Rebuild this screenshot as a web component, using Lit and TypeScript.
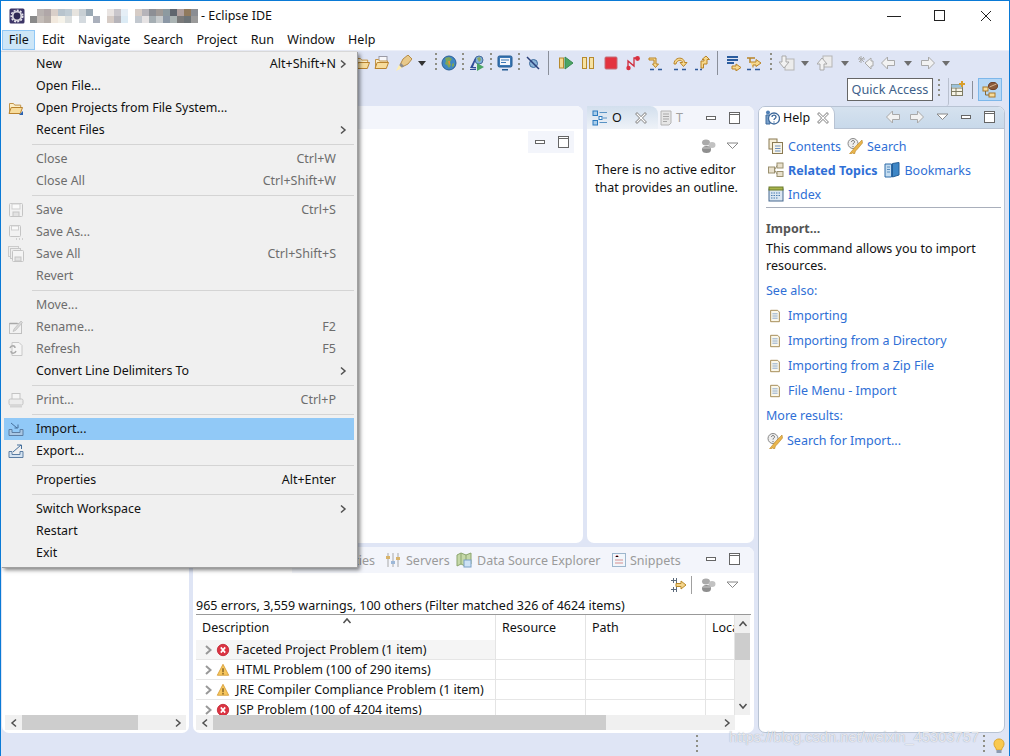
import { LitElement, html, css, svg } from "lit";
import { customElement } from "lit/decorators.js";

const s16 = (c: any, sz = 16) => html`<svg class="ic" width=${sz} height=${sz} viewBox="0 0 16 16">${c}</svg>`;

const shapes: Record<string, any> = {
  eclipse: svg`<rect x="0.5" y="0.5" width="15" height="15" rx="1.5" fill="#3c3566"/><circle cx="8" cy="8" r="5.200" fill="#d8d6de"/><circle cx="8" cy="8" r="5.800" fill="none" stroke="#e8e6ee" stroke-width="1.500" stroke-dasharray="2 1.300"/><circle cx="8" cy="8" r="3.400" fill="#2f2a55"/>`,
  folder: svg`<path d="M1.5 13V3.5h4l1.2 1.6h6V8" fill="#fbeec8" stroke="#c2944a"/><path d="M1 13.5l2.2-6h11.3l-2.2 6z" fill="#f7dc9c" stroke="#b9832f"/>`,
  folderBlue: svg`<path d="M1.5 13V3.5h4l1.2 1.6h6V8" fill="#fbeec8" stroke="#c2944a"/><path d="M1 13.5l2.2-6h11.3l-2.2 6z" fill="#f7dc9c" stroke="#b9832f"/><path d="M11 15l4-4v4z" fill="#2a62b0"/>`,
  openDoc: svg`<rect x="5" y="1.5" width="8" height="6" fill="#f7f7fa" stroke="#9a9aa5"/><path d="M1.5 13V4.5h3l1 1.5h8V8" fill="#fbeec8" stroke="#c2944a"/><path d="M1 13.5l2.2-6h11.3l-2.2 6z" fill="#f7dc9c" stroke="#b9832f"/>`,
  pen: svg`<path d="M4 10l3-6 5-4 4 4-4 5-6 3z" fill="#e8c98a" stroke="#b58b46"/><path d="M5 8l3 3-3 2-2-2z" fill="#8d8d8d"/><path d="M0 16l3-6 3 3z" fill="#ffeeb0"/>`,
  globe: svg`<circle cx="8" cy="8" r="7" fill="#3f87c4" stroke="#2a5f95"/><path d="M4 3l4-1 3 2-2 3 1 3-2 3-2-3-2-1 1-3z" fill="#7ea65a"/><path d="M7 6l2 0 0 3-1 1z" fill="#e2913a"/><path d="M11 9l2-1 0 3-2 1z" fill="#7ea65a"/>`,
  runWeb: svg`<circle cx="10" cy="5" r="4" fill="#7cb0d8" stroke="#496c9b"/><path d="M8 3l3-1 1 3-2 2z" fill="#8fa860"/><path d="M1 13L6 3l1 1-3 8h3v1.500z" fill="#2f4d99"/><path d="M1 14h6v1H1z" fill="#2f4d99"/><path d="M8 8l7 4-7 4z" fill="#4aa564"/>`,
  monitor: svg`<rect x="1" y="1" width="14" height="11" rx="1.500" fill="#3b78b5" stroke="#235a92"/><rect x="3" y="3" width="10" height="7" fill="#f3f6fb"/><path d="M4 5h8M4 7.500h5" stroke="#3b78b5"/><path d="M5 14h6v1.500H5z" fill="#235a92"/>`,
  slash: svg`<ellipse cx="8.500" cy="8.500" rx="4" ry="4" fill="#8bb4d8" stroke="#3d6a9c"/><path d="M2 2l12 12" stroke="#2a3f7a" stroke-width="1.500"/>`,
  resume: svg`<rect x="1.500" y="3" width="4" height="10" fill="#f4d98e" stroke="#b78a2e"/><path d="M7 2l8 6-8 6z" fill="#4aa564" stroke="#3a8a52"/>`,
  pause: svg`<rect x="2.500" y="2.500" width="4" height="11" fill="#f6e2a4" stroke="#b78a2e"/><rect x="9.500" y="2.500" width="4" height="11" fill="#f6e2a4" stroke="#b78a2e"/>`,
  stop: svg`<rect x="2" y="2" width="12" height="12" rx="1" fill="#e3333f" stroke="#c2707a"/>`,
  disc: svg`<path d="M3 13V6l6 5V3l2 0" fill="none" stroke="#cf2a3a" stroke-width="1.300"/><circle cx="3.500" cy="13" r="2.200" fill="#d9303f"/><circle cx="12.500" cy="3.500" r="2.400" fill="#d9303f"/>`,
  into: svg`<path d="M1 3h7v6h2.500L7.500 12.500 4.500 9H6V5H1z" fill="#f7d98f" stroke="#b98427"/><path d="M2 14.500h4M10 14.500h4" stroke="#2e5a9a" stroke-width="1.500"/>`,
  over: svg`<path d="M2 9C2 2 12 1 12.500 7.500H15l-3.500 4-3.500-4h2.500C10 4 4.500 5 4 9z" fill="#f7d98f" stroke="#b98427"/><path d="M2 14.500h4M10 14.500h4" stroke="#2e5a9a" stroke-width="1.500"/>`,
  ret: svg`<path d="M7 13V6h3V4.500H8L12 1l3.500 3.500H13V9H9.500v4z" fill="#f7d98f" stroke="#b98427"/><path d="M1 14.500h3M6 14.500h2" stroke="#2e5a9a" stroke-width="1.500"/>`,
  filters: svg`<path d="M1 2h11M1 5h11M1 8h7" stroke="#2b5c9e" stroke-width="2"/><path d="M6 11h4V9l5 3.500L10 16v-2H6z" fill="#f7d98f" stroke="#b98427"/>`,
  tfilter: svg`<path d="M1 3h8M4 3v5" stroke="#b98427" stroke-width="1.500"/><path d="M4 7h6V4.500l5 3.500-5 3.500V10H7v2.500" fill="#f7d98f" stroke="#b98427"/><path d="M1 14.500h4M9 14.500h5" stroke="#2e5a9a" stroke-width="1.500"/>`,
  down: svg`<rect x="6" y="4" width="9" height="11" fill="#ececec" stroke="#b5b5b5"/><path d="M3 1h4v6h3l-5 6-5-6h3z" fill="#f2f2f2" stroke="#a9a9a9"/>`,
  up: svg`<rect x="6" y="1" width="9" height="11" fill="#ececec" stroke="#b5b5b5"/><path d="M3 15h4V9h3L5 3 0 9h3z" fill="#f2f2f2" stroke="#a9a9a9"/>`,
  lastEdit: svg`<path d="M7 8l6-5v3h2v5h-2v3z" fill="#f2f2f2" stroke="#a9a9a9"/><path d="M3 1v7M0 4h7M1 2l5 5M6 2L1 7" stroke="#aaa"/>`,
  back: svg`<path d="M1.500 8l6-6v3.500h7v5h-7V14z" fill="#f2f2f2" stroke="#a9a9a9"/>`,
  fwd: svg`<path d="M14.500 8l-6-6v3.500h-7v5h7V14z" fill="#f2f2f2" stroke="#a9a9a9"/>`,
  perspNew: svg`<rect x="1.500" y="3.500" width="11" height="11" fill="#f6f3e6" stroke="#7d7a63"/><path d="M1.500 7h11M6 7v7.500M1.500 10.500h11" stroke="#7d7a63"/><rect x="1.500" y="3.500" width="11" height="3" fill="#9bc3dd"/><path d="M12 0v6M9 3h6" stroke="#d99e2c" stroke-width="2"/>`,
  persp: svg`<rect x="1" y="5" width="5" height="4" fill="#f7dc9c" stroke="#a8792b"/><rect x="7" y="11" width="6" height="4" fill="#f7dc9c" stroke="#a8792b"/><path d="M3.500 9v4H7" fill="none" stroke="#8a6a30"/><ellipse cx="11" cy="4" rx="4.500" ry="3.600" fill="#8a5a3a" stroke="#6d3f25"/><path d="M7.500 5l7-3" stroke="#d6b48f"/>`,
  outline: svg`<rect x="1" y="1" width="4.500" height="4.500" fill="#a9cdea" stroke="#2d7bbf"/><rect x="1" y="10.500" width="4.500" height="4.500" fill="#a9cdea" stroke="#2d7bbf"/><rect x="7" y="6.500" width="3" height="3" fill="#fff" stroke="#2d7bbf"/><path d="M7.500 2.500H15M11 8h4M7.500 12.500H15" stroke="#5a93c4"/>`,
  tasks: svg`<path d="M3 1h10v12l-2 2H3z" fill="#e6e6e6" stroke="#b4b4b4"/><path d="M5 4h6M5 6.500h6M5 9h6M5 11.500h4" stroke="#a8a8a8"/>`,
  cogs: svg`<ellipse cx="6" cy="4.500" rx="4" ry="3" fill="#aaa"/><ellipse cx="12" cy="7" rx="3.500" ry="3" fill="#c2c2c2"/><ellipse cx="6.500" cy="11.500" rx="4.500" ry="3.500" fill="#8f8f8f"/><path d="M3 10h7" stroke="#ccc"/>`,
  helpI: svg`<circle cx="4" cy="2.500" r="2" fill="#4e7fb5"/><path d="M2 5h4v9H2z" fill="#7ba2cb" stroke="#3e6a9c"/><circle cx="10" cy="8.500" r="5.500" fill="#fff" stroke="#3e6a9c" stroke-width="1.300"/><path d="M8 7c0-2.500 4-2.500 4 0 0 1.500-2 1.500-2 3M10 11.500v1" fill="none" stroke="#3e6a9c" stroke-width="1.300"/>`,
  contents: svg`<rect x="1" y="1" width="8" height="10" fill="#f6efd9" stroke="#8a7a52"/><rect x="4.500" y="4.500" width="10" height="11" fill="#f8f4e6" stroke="#8a7a52"/><path d="M7 8h5.500M7 10.500h5.500M7 13h5.500" stroke="#6a8fc0"/>`,
  search: svg`<circle cx="6" cy="5.500" r="5" fill="#eee" stroke="#888"/><path d="M4.500 4c0-2 3-2 3 0 0 1-1.500 1.200-1.500 2.500M6 8v1" stroke="#6a6a6a" fill="none"/><path d="M9 8l6-6 0.500 3-5 6-2 2-1 3-2-1-4 2z" fill="#e9b54d" stroke="#b98427" stroke-width=".6"/>`,
  related: svg`<rect x="0.500" y="5" width="6" height="6" fill="#e8e0cc" stroke="#9a906f"/><rect x="9" y="1" width="6" height="5" fill="#e8e0cc" stroke="#9a906f"/><rect x="9" y="9.500" width="6" height="5" fill="#e8e0cc" stroke="#9a906f"/><path d="M6.500 8L9 3.500M6.500 8L9 12" stroke="#9a906f"/>`,
  book: svg`<path d="M1 2h6.500v13H1z" fill="#c5ddf0" stroke="#2c6aa8"/><path d="M8.500 1.500l6.500-1V13l-6.500 2z" fill="#3d86c6" stroke="#245e96"/><path d="M3 5h3M3 7.500h3M3 10h3" stroke="#5a8ec0"/>`,
  index: svg`<rect x="1" y="3" width="14" height="12" fill="#dbe6f2" stroke="#46688f"/><rect x="1" y="1" width="14" height="3" fill="#a8b44c" stroke="#6a7a2a"/><path d="M3 7h10M3 9.500h10M3 12h7" stroke="#4b7cb0" stroke-dasharray="1.500 1"/>`,
  doc: svg`<path d="M3 1.500h8l2 2v11H3z" fill="#fbf8ec" stroke="#9b7f45"/><path d="M5 5.500h6M5 8h6M5 10.500h6" stroke="#7fa0cc"/>`,
  servers: svg`<path d="M3 1v14M8 1v14M13 1v14" stroke="#a9a9a9"/><rect x="1" y="4" width="4" height="3" fill="#d8b36a"/><rect x="6" y="9" width="4" height="3" fill="#9db8d8"/><rect x="11" y="5" width="4" height="3" fill="#d8b36a"/>`,
  datasrc: svg`<path d="M1 3l4-2 5 2 5-2v11l-5 2.500L5 12l-4 2z" fill="#c5d8a8" stroke="#8ba56e"/><path d="M5 1v11M10 3v11" stroke="#8ba56e"/><rect x="8" y="8" width="7" height="7" fill="#cde2f5" stroke="#7ba0c5"/>`,
  snippets: svg`<rect x="1.500" y="1.500" width="13" height="13" fill="#f1f6fb" stroke="#9db6cd"/><path d="M4 5l2-2 2 2M4 8h8M4 11h8" stroke="#d78f8f"/>`,
  pin: svg`<path d="M1 3.500h5M3.500 1v5M1 12.500h5M3.500 10v5M6.500 1v6M6.500 9v6" stroke="#5c6b7c"/><path d="M6 6.500h5V4l5 4-5 4V9.500H6z" fill="#f4d48a" stroke="#ba8a2a"/>`,
  err: svg`<circle cx="8" cy="8" r="6.500" fill="#dc3342" stroke="#c22a38"/><path d="M5.500 5l5 6M10.500 5l-5 6" stroke="#fff" stroke-width="1.800"/>`,
  warn: svg`<path d="M8 1.500l6.500 12.500h-13z" fill="#f7c65c" stroke="#d69e3a"/><path d="M8 6v4.500M8 11.500v1.500" stroke="#7a5a20" stroke-width="1.500"/>`,
  save: svg`<rect x="1.500" y="1.500" width="13" height="13" rx="1" fill="#f2f2f2" stroke="#c4c4c4"/><rect x="4" y="2" width="8" height="5" fill="#fafafa" stroke="#cfcfcf"/><rect x="5" y="10" width="6" height="4.500" fill="#e2e2e2" stroke="#c4c4c4"/>`,
  saveAs: svg`<rect x="1.500" y="1.500" width="11" height="11" rx="1" fill="#f2f2f2" stroke="#c4c4c4"/><rect x="3.500" y="2" width="7" height="4" fill="#fafafa" stroke="#cfcfcf"/><path d="M8 15h1M11 15h1M14 15h1" stroke="#b0b0b0"/>`,
  saveAll: svg`<rect x="0.500" y="0.500" width="10" height="10" fill="#eee" stroke="#ccc"/><rect x="2.500" y="2.500" width="10" height="10" fill="#eee" stroke="#c8c8c8"/><rect x="4.500" y="4.500" width="11" height="11" rx="1" fill="#f4f4f4" stroke="#c4c4c4"/><rect x="7" y="11" width="6" height="4" fill="#e2e2e2" stroke="#c4c4c4"/>`,
  rename: svg`<rect x="1.500" y="4.500" width="12" height="10" fill="#f2f2f2" stroke="#c0c0c0"/><path d="M1.500 4.500h8" stroke="#a8a8a8" stroke-width="1.500"/><path d="M6 10l7-8 1.500 1.500-7 8-2.500 1z" fill="#d8d8d8" stroke="#bbb" stroke-width=".7"/>`,
  refresh: svg`<path d="M4 1.500h7l3 3v10H4z" fill="#f5f5f5" stroke="#c8c8c8"/><path d="M2 7c1-3 5-3 5 0M8 10c-1 3-5 3-5 0" stroke="#aaa" stroke-width="1.500" fill="none"/>`,
  print: svg`<rect x="4" y="1.500" width="8" height="6" fill="#f5f5f5" stroke="#c4c4c4"/><rect x="1" y="7" width="14" height="6" rx="1.500" fill="#ececec" stroke="#c4c4c4"/><path d="M2 14.500h12" stroke="#d4d4d4" stroke-width="2"/>`,
  import: svg`<path d="M1 8.500v6h14v-6h-3v3H4v-3z" fill="#a9c7e4" stroke="#5d7ea3"/><path d="M3 2l6 5M6.500 7H10V3.500" fill="none" stroke="#47709c"/>`,
  export: svg`<path d="M1 8.500v6h14v-6h-3v3H4v-3z" fill="#d6e4f2" stroke="#5d7ea3"/><path d="M5 9l8-7M9 2h4.500v4" fill="none" stroke="#47709c"/>`,
  bulb: svg`<path d="M8 1C4 1 3 4 3 6c0 2.500 2 3.500 2.500 6h5C11 9.500 13 8.500 13 6c0-2-1-5-5-5z" fill="#f9c94f" stroke="#dca32a"/><rect x="5.500" y="12" width="5" height="3" fill="#8d9bb0"/>`,
  close: svg`<path d="M4 4l8 8M12 4l-8 8" stroke="#8c8c8c" stroke-width="2.800" stroke-linecap="square"/><path d="M4 4l8 8M12 4l-8 8" stroke="#fff" stroke-width="1.100" stroke-linecap="square"/>`,
  min: svg`<rect x="3.500" y="6.500" width="9" height="3" fill="#fff" stroke="#666"/>`,
  max: svg`<rect x="3.500" y="2.500" width="10" height="11" fill="#fff" stroke="#666"/><path d="M3.500 4.500h10" stroke="#666"/>`,
  menuTri: svg`<path d="M2 5h11L7.500 10.500z" fill="#fff" stroke="#888"/>`,
};
const ic = (n: string, sz = 16) => s16(shapes[n], sz);

const chev = (d: string, col = "#505050", w = 1.5) => html`<svg class="ic" width="10" height="10" viewBox="0 0 10 10"><path d=${d} fill="none" stroke=${col} stroke-width=${w}/></svg>`;
const L = chev("M7 1.500L3 5l4 3.500");
const R = chev("M3 1.500L7 5 3 8.500");
const U = chev("M1.500 7L5 3l3.500 4");
const D = chev("M1.500 3L5 7l3.500-4");
const EXP = chev("M3 1L7.500 5 3 9", "#999", 2);

type TB = [number, string];
const TOOLS: TB[] = [
  [362, "folder"], [380, "openDoc"], [405, "pen"], [424, "#tri"], [435, "#grip"], [449, "globe"], [463, "#grip"],
  [477, "runWeb"], [491, "#grip"], [505, "monitor"], [519, "#grip"], [533, "slash"], [547, "#sep"], [565, "resume"],
  [588, "pause"], [611, "stop"], [632, "disc"], [655, "into"], [680, "over"], [705, "ret"], [716, "#sep"], [732, "filters"],
  [756, "tfilter"], [772, "#grip"], [785, "down"], [804, "#trig"], [825, "up"], [845, "#trig"], [864, "lastEdit"], [889, "back"],
  [908, "#trig"], [928, "fwd"], [947, "#trig"],
];

const MOSAIC = [
  "#fff #b9b3b1 #b0a7a8 #d9cfc9 #b8c4cd #c0ccd4 #e7e4df #c8cfd4 #9aa9b5 #fff #fff #e9e4e2 #c9c6cb #e5eef6 #fff #d6ccc6 #b6b4ba #8d8f95 #a09a97 #8d9aa0 #60666e #b0a09e #907a5e #8a8d93",
  "#8a8a8a #c4bdb8 #b6aea9 #f2e9de #f6f3ea #dde0df #fff #d4dadf #fff #aab0bc #fff #d6ccc6 #b6b4ba #dcebf5 #fff #c2c8cf #e6e3e4 #a5aeb3 #c8ccce #8b97a5 #aab3b3 #7a7a7a #6d7376 #9a9a9a",
];

const MENU: any[] = [
  { t: "New", k: "Alt+Shift+N", a: 1 }, { t: "Open File..." }, { t: "Open Projects from File System...", i: "folderBlue" }, { t: "Recent Files", a: 1 }, 0,
  { t: "Close", k: "Ctrl+W", d: 1 }, { t: "Close All", k: "Ctrl+Shift+W", d: 1 }, 0,
  { t: "Save", k: "Ctrl+S", d: 1, i: "save" }, { t: "Save As...", d: 1, i: "saveAs" }, { t: "Save All", k: "Ctrl+Shift+S", d: 1, i: "saveAll" }, { t: "Revert", d: 1 }, 0,
  { t: "Move...", d: 1 }, { t: "Rename...", k: "F2", d: 1, i: "rename" }, { t: "Refresh", k: "F5", d: 1, i: "refresh" }, { t: "Convert Line Delimiters To", a: 1 }, 0,
  { t: "Print...", k: "Ctrl+P", d: 1, i: "print" }, 0,
  { t: "Import...", i: "import", h: 1 }, { t: "Export...", i: "export" }, 0,
  { t: "Properties", k: "Alt+Enter" }, 0,
  { t: "Switch Workspace", a: 1 }, { t: "Restart" }, { t: "Exit" },
];

const ROWS = [
  ["err", "Faceted Project Problem (1 item)"],
  ["warn", "HTML Problem (100 of 290 items)"],
  ["warn", "JRE Compiler Compliance Problem (1 item)"],
  ["err", "JSP Problem (100 of 4204 items)"],
];

@customElement("app-root")
export class AppRoot extends LitElement {
  static styles = css`
    :host { display: block; width: 1010px; height: 756px; font-family: "Noto Sans", sans-serif; font-size: 12.5px; color: #111; }
    * { box-sizing: border-box; }
    .ic { display: block; flex: none; }
    .root { position: relative; width: 1010px; height: 756px; overflow: hidden; background: #dfe5f5; border: solid #0a7ad6; border-width: 1px 1px 0 1px; display: flex; flex-direction: column; }
    .title { height: 29px; background: #fff; display: flex; align-items: center; padding-left: 8px; flex: none; }
    .mosaic { display: grid; grid-template-columns: repeat(24, 7px); grid-auto-rows: 7px; margin-left: 5px; }
    .apptitle { margin-left: 3px; }
    .winbtns { margin-left: auto; display: flex; }
    .winbtn { width: 46px; height: 29px; display: flex; align-items: center; justify-content: center; }
    .menubar { height: 20px; background: #fff; display: flex; flex: none; padding-left: 1px; line-height: 20px; }
    .mi { padding: 0 6.700px; }
    .mi.on { background: #cde6f7; box-shadow: inset 0 0 0 1px #90c8f6; }
    .tb1 { height: 25px; flex: none; display: flex; align-items: center; padding-left: 353px; border-top: 1px solid #eceff8; }
    .slot { display: flex; justify-content: center; align-items: center; height: 24px; flex: none; }
    .grip { width: 2px; height: 20px; background: repeating-linear-gradient(to bottom, #8f8f85 0 2px, transparent 2px 5px); }
    .vsep { width: 1px; height: 24px; background: #8a8f9a; }
    .tri { width: 0; height: 0; border: 4px solid transparent; border-top: 5px solid #333; margin-top: 4px; }
    .trig { width: 0; height: 0; border: 4px solid transparent; border-top: 5px solid #6e6e6e; margin-top: 4px; }
    .tb2 { height: 31px; flex: none; display: flex; align-items: flex-start; padding: 3px 0 0 846px; }
    .qa { width: 86px; height: 23px; background: #fff; border: 1px solid #666; color: #3e5f8a; line-height: 21px; text-align: center; font-size: 12.7px; }
    .tb2 .grip { margin: 1px 5px 0 5px; height: 19px; }
    .curve { width: 4px; height: 28px; border-right: 1px solid #b9c0cf; border-radius: 0 0 3px 0; margin-right: 1px; }
    .pbtn { width: 16px; margin: 3px 6px 0 0; }
    .tb2 .vsep { height: 18px; margin: 3px 5px 0 0; }
    .pon { width: 24px; height: 23px; background: #b5d7f6; border: 1px solid #7db7ea; display: flex; align-items: center; justify-content: center; }
    .work { flex: 1; min-height: 0; display: flex; gap: 4px; padding: 0 4px 0 1px; }
    .panel { background: #fff; border-radius: 0 7px 7px 7px; display: flex; flex-direction: column; overflow: hidden; min-height: 0; position: relative; }
    .left { width: 187px; justify-content: flex-end; padding: 0 3px 3px; border-radius: 7px; }
    .mid { width: 561px; display: flex; flex-direction: column; gap: 4px; }
    .midtop { height: 437px; display: flex; gap: 4px; flex: none; }
    .editor { width: 390px; }
    .tabs { height: 23px; flex: none; background: #f3f5fb; display: flex; align-items: center; }
    .edtool { margin: 2px 9px 0 auto; width: 46px; height: 22px; background: #f3f5fb; display: flex; align-items: center; justify-content: center; gap: 7px; }
    .outline { width: 167px; }
    .tab { height: 23px; display: flex; align-items: center; flex: none; }
    .otab { width: 71px; background: linear-gradient(#d2dfed, #eef2f8); border-radius: 0 8px 0 0; padding-left: 5px; }
    .otab span { margin: 0 8px 0 4px; color: #111; width: 13px; }
    .ttab { color: #a0a0a0; width: 44px; gap: 2px; justify-content: flex-start; }
    .viewbtns { margin-left: auto; display: flex; gap: 7px; padding-right: 12px; }
    .otool { height: 31px; display: flex; align-items: center; justify-content: flex-end; gap: 9px; padding: 2px 13px 0 0; }
    .otext { padding-left: 8px; line-height: 17.500px; margin-top: 1px; }
    .help { width: 247px; border: 1px solid #b8c3d3; border-radius: 7px; padding: 0; }
    .htabs { background: linear-gradient(#d6e2ef, #c8d9ea); height: 23px; flex: none; display: flex; align-items: center; margin-top: -1px; border-bottom: 1px solid #b8c3d3; }
    .htab { width: 76px; height: 23px; background: #fff; border-radius: 0 8px 0 0; display: flex; align-items: center; padding-left: 5px; margin-bottom: -1px; border-right: 1px solid #b8c3d3; }
    .htab span { margin: 0 5px 0 3px; }
    .harrows { margin-left: 50px; display: flex; gap: 8px; }
    .hright { margin-left: auto; display: flex; gap: 7px; padding-right: 7px; }
    .hbody { padding: 0 3px 0 7px; display: flex; flex-direction: column; }
    .hl { display: flex; align-items: center; color: #2f6fd6; height: 25px; padding-left: 1px; }
    .hl .ic { margin-right: 4px; }
    .indent { padding-left: 2px; }
    .fmrow { height: 24px; }
    .fmrow.a { margin-top: 5px; }
    .b { font-weight: 700; }
    .hr { height: 1px; background: #a9afbb; margin: 1px 0 12px; width: 235px; flex: none; }
    .himp { font-weight: 700; color: #555; height: 18px; line-height: 18px; }
    .hp { line-height: 17px; margin: 2px 0 4px; }
    .hlink { color: #2f6fd6; height: 25px; line-height: 25px; }
    .hlinkdoc { display: flex; align-items: center; height: 25px; color: #2f6fd6; padding-left: 2px; }
    .hlinkdoc .ic { margin-right: 6px; }
    .bottom { height: 186px; flex: none; border-radius: 7px; }
    .btabs { height: 26px; flex: none; background: #f3f5fb; display: flex; align-items: center; color: #9a9a9a; position: relative; }
    .bactive { width: 99px; height: 26px; background: #fff; flex: none; }
    .btab { display: flex; align-items: center; flex: none; }
    .bprops { width: 83px; justify-content: flex-end; }
    .bserv { width: 81px; padding-left: 10px; }
    .bdata { width: 155px; }
    .btabs .ic { margin-right: 5px; }
    .bsnip .ic { margin-right: 3px; }
    .btabs .viewbtns { padding-right: 12px; margin-top: -2px; }
    .btabs .viewbtns .ic { margin-right: 0; }
    .btool { height: 24px; flex: none; display: flex; align-items: center; justify-content: flex-end; padding: 0 13px 0 0; }
    .btool .vsep { height: 18px; margin: 0 8px 0 5px; background: #a0a0a0; }
    .btool .t { margin-left: 9px; }
    .sum { height: 18px; line-height: 17px; flex: none; margin: 0 3px; border-bottom: 1px solid #999; white-space: nowrap; }
    .tablewrap { display: flex; margin-left: 3px; height: 100px; flex: none; }
    .table { width: 539px; overflow: hidden; height: 100px; position: relative; }
    .thead { display: flex; height: 25px; line-height: 25px; }
    .trow { display: flex; height: 20px; line-height: 19px; }
    .cell { border-right: 1px solid #e4e4e4; flex: none; overflow: hidden; white-space: nowrap; padding-left: 6px; }
    .trow .cell { border-bottom: 1px solid #e6e6e6; }
    .c1 { width: 300px; } .c2 { width: 90px; } .c3 { width: 120px; } .c4 { width: 29px; }
    .desc { display: flex; align-items: center; padding-left: 7px; }
    .exp { margin-right: 3px; flex: none; }
    .desc > .ic { margin-right: 6px; }
    .first { background: #f5f5f5; }
    .sort { position: absolute; left: 146px; top: 1px; }
    .vbar { width: 15px; height: 100px; background: #f0f0f0; display: flex; flex-direction: column; align-items: center; flex: none; }
    .vb { height: 18px; display: flex; align-items: center; justify-content: center; flex: none; }
    .vthumb { width: 15px; height: 27px; background: #cdcdcd; flex: none; }
    .vsp { flex: 1; }
    .hbar { height: 15px; display: flex; background: #f0f0f0; flex: none; align-items: stretch; }
    .hb { width: 17px; display: flex; align-items: center; justify-content: center; flex: none; }
    .ht { flex: 1; min-width: 0; }
    .hth { height: 100%; background: #cdcdcd; }
    .bhbar { margin: 0 19px 3px 3px; }
    .status { height: 23px; flex: none; display: flex; align-items: center; padding-left: 695px; position: relative; }
    .status .grip { height: 20px; }
    .status .g2 { margin-left: 285px; }
    .status .bulb { margin-left: 6px; margin-top: 3px; }
    .wm { position: absolute; left: 728px; top: 727px; font-family: "Liberation Sans", sans-serif; font-size: 14.700px; line-height: 18px; color: rgba(255,255,255,.75); text-shadow: 0 0 1px rgba(110,120,140,.75); white-space: nowrap; }
    .menu { position: absolute; left: 0; top: 50px; width: 356px; height: 516px; background: #f0f0f0; box-shadow: 1px 1px 0 #a0a0a0, 3px 3px 4px rgba(0,0,0,.5); border-top: 1px solid #d8d8d8; padding: 1px 3px 0; font-size: 12.400px; }
    .it { height: 22px; display: flex; align-items: center; line-height: 22px; }
    .it.h { background: #91c9f7; }
    .icw { width: 32px; padding-left: 4px; flex: none; display: flex; }
    .it.d { color: #6d6d6d; }
    .it .k { margin-left: auto; font-size: 12.500px; }
    .arr { width: 18px; flex: none; display: flex; justify-content: flex-end; padding-right: 6px; }
    .sp { height: 7px; display: flex; align-items: center; padding-left: 28px; }
    .sp div { height: 1px; width: 100%; background: #d4d4d4; }
  `;

  private vb(...n: string[]) {
    return n.map((x) => ic(x));
  }

  private hbar(cls: string, w: number) {
    return html`<div class="hbar ${cls}"><div class="hb">${L}</div><div class="ht"><div class="hth" style="width:${w}px"></div></div><div class="hb">${R}</div></div>`;
  }

  private tools() {
    return TOOLS.map(([x, n], i) => {
      const prev = i === 0 ? 354 : TOOLS[i - 1][0];
      const next = i === TOOLS.length - 1 ? x + 16 : TOOLS[i + 1][0];
      const l = i === 0 ? 354 : (prev + x) / 2;
      const r = (x + next) / 2;
      const content = n === "#grip" ? html`<div class="grip"></div>`
        : n === "#sep" ? html`<div class="vsep"></div>`
        : n === "#tri" ? html`<div class="tri"></div>`
        : n === "#trig" ? html`<div class="trig"></div>`
        : ic(n);
      return html`<div class="slot" style="width:${r - l}px">${content}</div>`;
    });
  }

  render() {
    return html`<div class="root">
      <div class="title">
        ${ic("eclipse")}
        <div class="mosaic">${MOSAIC.flatMap((r) => r.split(" ").map((c) => html`<i style="background:${c}"></i>`))}</div>
        <span class="apptitle">- Eclipse IDE</span>
        <div class="winbtns">
          <div class="winbtn"><svg width="14" height="14"><path d="M0 7.500h14" stroke="#222"/></svg></div>
          <div class="winbtn"><svg width="12" height="12"><rect x=".5" y=".5" width="10" height="10" fill="none" stroke="#222"/></svg></div>
          <div class="winbtn"><svg width="12" height="12"><path d="M1 1l10 10M11 1L1 11" stroke="#222"/></svg></div>
        </div>
      </div>
      <div class="menubar">
        ${["File", "Edit", "Navigate", "Search", "Project", "Run", "Window", "Help"].map((m, i) => html`<div class="mi ${i === 0 ? "on" : ""}">${m}</div>`)}
      </div>
      <div class="tb1">${this.tools()}</div>
      <div class="tb2">
        <div class="qa">Quick Access</div>
        <div class="grip"></div>
        <div class="curve"></div>
        <div class="pbtn">${ic("perspNew")}</div>
        <div class="vsep"></div>
        <div class="pon">${ic("persp")}</div>
      </div>
      <div class="work">
        <div class="panel left">${this.hbar("", 116)}</div>
        <div class="mid">
          <div class="midtop">
            <div class="panel editor">
              <div class="tabs"></div>
              <div class="edtool">${this.vb("min", "max")}</div>
            </div>
            <div class="panel outline">
              <div class="tabs">
                <div class="tab otab">${ic("outline")}<span>O</span>${ic("close")}</div>
                <div class="tab ttab">${ic("tasks")}T</div>
                <div class="viewbtns">${this.vb("min", "max")}</div>
              </div>
              <div class="otool">${ic("cogs")}${ic("menuTri")}</div>
              <div class="otext">There is no active editor<br />that provides an outline.</div>
            </div>
          </div>
          <div class="panel bottom">
            <div class="btabs">
              <div class="bactive"></div>
              <div class="btab bprops">Properties</div>
              <div class="btab bserv">${ic("servers")}Servers</div>
              <div class="btab bdata">${ic("datasrc")}Data Source Explorer</div>
              <div class="btab bsnip">${ic("snippets")}Snippets</div>
              <div class="viewbtns">${this.vb("min", "max")}</div>
            </div>
            <div class="btool">${ic("pin")}<div class="vsep"></div>${ic("cogs")}<div class="t">${ic("menuTri")}</div></div>
            <div class="sum">965 errors, 3,559 warnings, 100 others (Filter matched 326 of 4624 items)</div>
            <div class="tablewrap">
              <div class="table">
                <div class="sort">${U}</div>
                <div class="thead">
                  <div class="cell c1">Description</div><div class="cell c2">Resource</div><div class="cell c3">Path</div><div class="cell c4">Location</div>
                </div>
                ${ROWS.map(([i, t], n) => html`<div class="trow">
                  <div class="cell c1 desc ${n === 0 ? "first" : ""}"><span class="exp">${EXP}</span>${ic(i, 14)}<span>${t}</span></div>
                  <div class="cell c2"></div><div class="cell c3"></div><div class="cell c4"></div>
                </div>`)}
              </div>
              <div class="vbar"><div class="vb">${U}</div><div class="vthumb"></div><div class="vsp"></div><div class="vb">${D}</div></div>
            </div>
            ${this.hbar("bhbar", 393)}
          </div>
        </div>
        <div class="panel help">
          <div class="htabs">
            <div class="htab">${ic("helpI")}<span>Help</span>${ic("close")}</div>
            <div class="harrows">${this.vb("back", "fwd")}</div>
            <div class="hright">${ic("menuTri")}${ic("min")}${ic("max")}</div>
          </div>
          <div class="hbody">
            <div class="hl fmrow a indent">${ic("contents")}<span style="margin-right:6px">Contents</span>${ic("search")}<span>Search</span></div>
            <div class="hl fmrow indent">${ic("related")}<span class="b" style="margin-right:7px">Related Topics</span>${ic("book")}<span>Bookmarks</span></div>
            <div class="hl fmrow indent">${ic("index")}<span>Index</span></div>
            <div class="hr"></div>
            <div class="himp">Import...</div>
            <div class="hp">This command allows you to import<br />resources.</div>
            <div class="hlink">See also:</div>
            ${["Importing", "Importing from a Directory", "Importing from a Zip File", "File Menu - Import"].map((t) => html`<div class="hlinkdoc">${ic("doc", 14)}<span>${t}</span></div>`)}
            <div class="hlink">More results:</div>
            <div class="hl">${ic("search")}<span>Search for Import...</span></div>
          </div>
        </div>
      </div>
      <div class="status">
        <div class="grip"></div><div class="grip g2"></div><div class="bulb">${ic("bulb")}</div>
      </div>
      <div class="wm">https://blog.csdn.net/weixin_45303757</div>
      <div class="menu">
        ${MENU.map((m) => m === 0 ? html`<div class="sp"><div></div></div>` : html`<div class="it ${m.d ? "d" : ""} ${m.h ? "h" : ""}">
          <div class="icw">${m.i ? ic(m.i) : ""}</div><span>${m.t}</span>
          ${m.k ? html`<span class="k">${m.k}</span>` : html`<span class="k"></span>`}
          <div class="arr">${m.a ? R : ""}</div>
        </div>`)}
      </div>
    </div>`;
  }
}
